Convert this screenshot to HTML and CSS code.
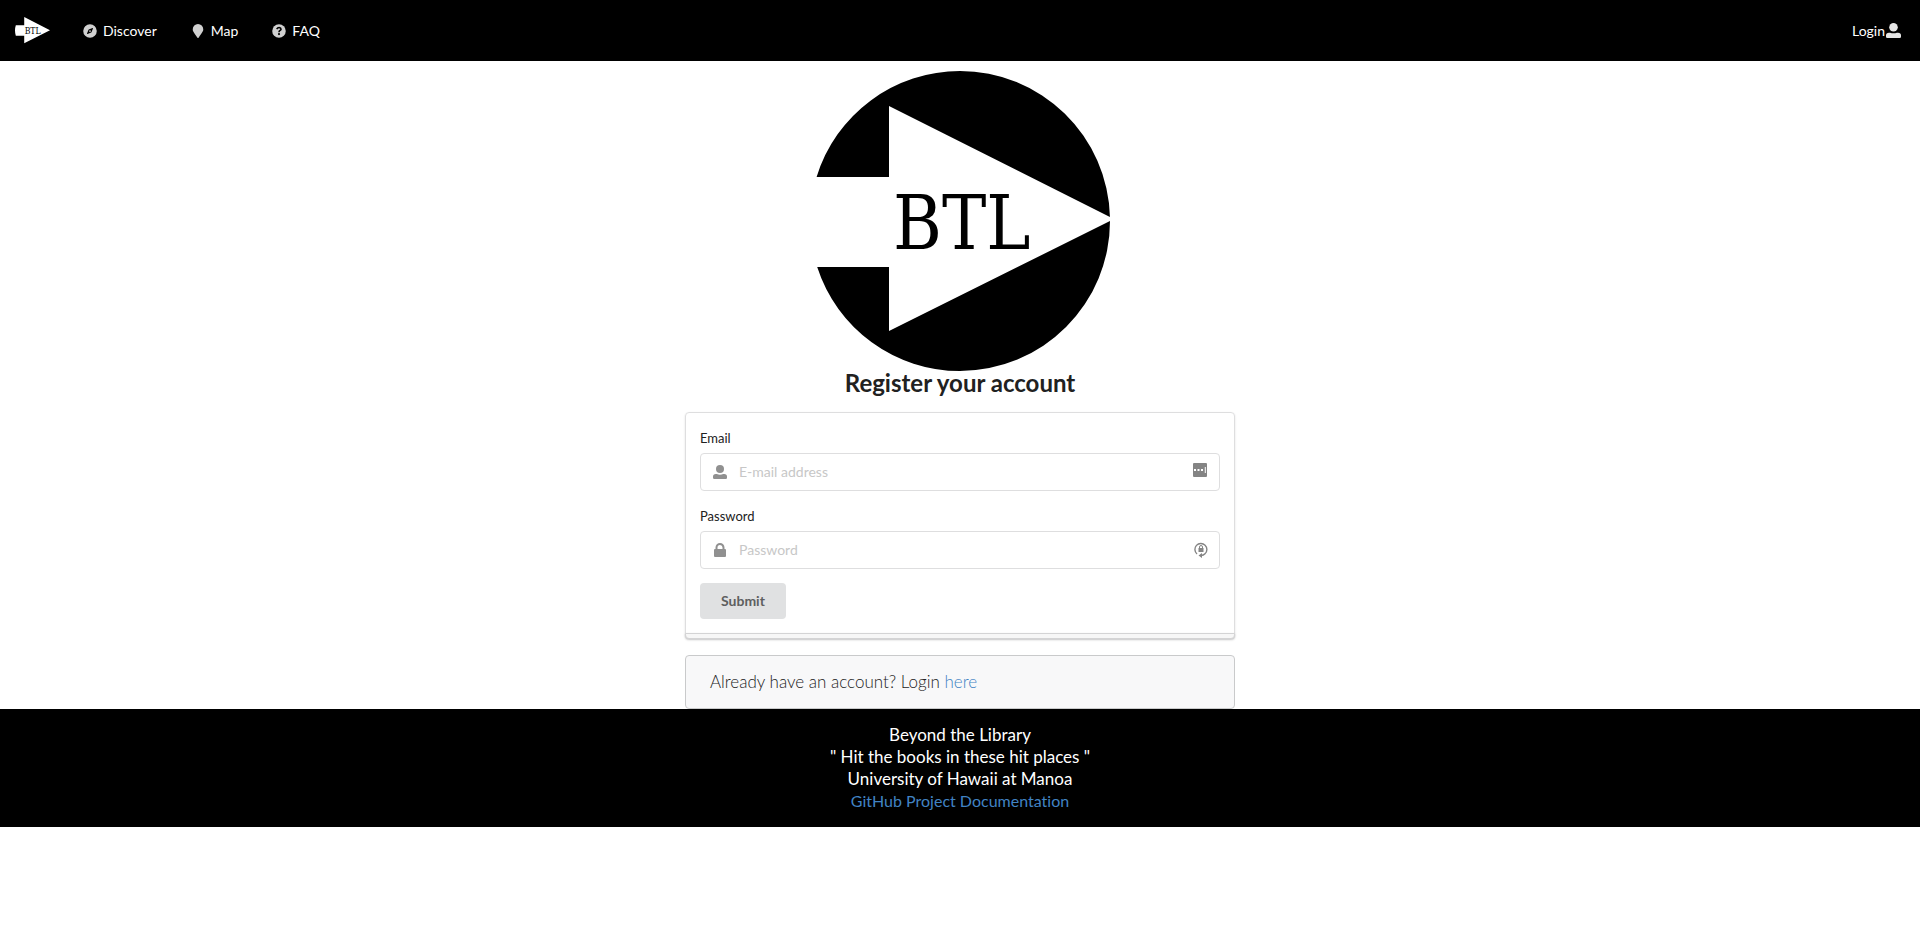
FILE: index.html
```html
<!DOCTYPE html>
<html lang="en">
<head>
<meta charset="utf-8">
<title>Beyond the Library</title>
<link rel="stylesheet" href="styles.css">
</head>
<body>
<nav class="navbar">
  <a class="item brand" href="#" aria-label="Home"><svg class="brand-logo" viewBox="0 0 300 300"><path fill="#fff" d="M7 106H79V35L300 148L79 260V196H7Q-7 150 7 106Z"/><text class="logo-text" x="83" y="178">BTL</text></svg></a>
  <a class="item" href="#"><svg class="icon" viewBox="0 0 512 512"><path fill-rule="evenodd" d="M256 8a248 248 0 1 0 0 496a248 248 0 1 0 0-496M365 165L310 303Q307 308 302 311L164 366Q142 371 147 347L202 209Q205 204 210 201L348 146Q371 142 365 165M256 224a32 32 0 1 0 0 64a32 32 0 1 0 0-64"/></svg>Discover</a>
  <a class="item" href="#"><svg class="icon" viewBox="-64 0 512 512"><path d="M172 502C27 291 0 270 0 192a192 192 0 0 1 384 0c0 78-27 99-172 310q-20 22-40 0"/></svg>Map</a>
  <a class="item" href="#"><svg class="icon" viewBox="0 0 512 512"><circle cx="256" cy="256" r="248"/><path fill="none" stroke="#000" stroke-width="58" d="M172 190Q205 130 260 130Q330 135 330 190C330 240 256 235 256 300"/><circle cx="256" cy="368" r="40" fill="#000"/></svg>FAQ</a>
  <a class="item login" href="#">Login<svg class="user-icon" viewBox="0 0 14 14"><circle cx="7" cy="4" r="4"/><path d="M0 12.800V11.500Q0 9 2.800 9H3.800Q7 10.300 10.200 9H11.200Q14 9 14 11.500V12.800Q14 14 12.800 14H1.200Q0 14 0 12.800Z"/></svg></a>
</nav>
<main class="register">
  <svg class="logo" viewBox="0 0 300 300" role="img" aria-label="BTL"><path d="M6.600 106A150 150 0 0 1 150 0A150 150 0 0 1 299.950 146L79 35V106ZM7.200 196A150 150 0 0 0 150 300A150 150 0 0 0 300 150L79 260V196Z"/><text class="logo-text" x="83" y="178">BTL</text></svg>
  <h2 class="title">Register your account</h2>
  <form class="card">
    <label class="label" for="email">Email</label>
    <div class="field">
      <svg class="lead" viewBox="0 0 14 14"><circle cx="7" cy="4" r="4"/><path d="M0 12.800V11.500Q0 9 2.800 9H3.800Q7 10.300 10.200 9H11.200Q14 9 14 11.500V12.800Q14 14 12.800 14H1.200Q0 14 0 12.800Z"/></svg>
      <input class="input" id="email" type="email" placeholder="E-mail address">
      <svg class="fill email-fill" viewBox="0 0 14 14"><rect width="14" height="14" rx="1"/><path fill="#fff" d="M1 6h2v2H1zM4.500 6h2v2h-2zM8 6h2v2H8zM11.800 4h1v6h-1z"/></svg>
    </div>
    <label class="label" for="password">Password</label>
    <div class="field">
      <svg class="lead" viewBox="0 0 14 14"><path fill-rule="evenodd" d="M2.500 6V4.500a4.500 4.500 0 0 1 9 0V6H12q1 0 1 1V13q0 1-1 1H2q-1 0-1-1V7q0-1 1-1ZM4.500 6h5V4.500a2.500 2.500 0 0 0-5 0Z"/></svg>
      <input class="input" id="password" type="password" placeholder="Password">
      <svg class="fill password-fill" viewBox="0 0 14 16"><path fill="none" stroke="#848484" stroke-width="1.400" d="M3 12A6 6 0 1 1 11 11.800Q9.500 13.500 7 13.500"/><path d="M4.500 6h5v4h-5zM4.500 13.500L8 11v5z"/><path fill="none" stroke="#848484" d="M5.500 6V5a1.500 1.500 0 0 1 3 0V6"/></svg>
    </div>
    <button class="submit" type="submit">Submit</button>
  </form>
  <p class="message">Already have an account? Login <a href="#">here</a></p>
</main>
<footer class="footer">
  <div>Beyond the Library</div>
  <div>" Hit the books in these hit places "</div>
  <div>University of Hawaii at Manoa</div>
  <a class="docs" href="#">GitHub Project Documentation</a>
</footer>
</body>
</html>
```
FILE: styles.css
```css
* { box-sizing: border-box; }
body { margin: 0; background: #fff; color: #212121; font: 14px/20px Lato, sans-serif; font-variant-ligatures: none; }
a { color: #4183c4; text-decoration: none; }
.logo-text { font: 74px "DejaVu Serif Condensed", "DejaVu Serif", serif; fill: #000; }

.navbar { display: flex; align-items: stretch; min-height: 61px; background: #000; }
.item { display: flex; align-items: center; padding: 0 16px 0 17px; color: #fff; }
.brand { padding: 0 15px; }
.brand-logo { width: 35px; height: 35px; }
.icon { width: 14px; height: 14px; margin: 0 6px 0 1px; fill: #d0d0d0; }
.login { margin-left: auto; padding-right: 19px; }
.user-icon { width: 15px; height: 15px; margin-left: 1px; fill: #e6e6e6; }

.register { display: flex; flex-direction: column; width: 100%; max-width: 550px; margin: 0 auto; padding-top: 10px; }
.logo { width: 300px; height: 300px; align-self: center; }
.title { margin: 0 0 17px; font-size: 24px; line-height: 24px; font-weight: 700; text-align: center; }
.card { position: relative; padding: 14px; margin-bottom: 18px; border: 1px solid #dededf; border-radius: 4px; box-shadow: 0 1px 2px #22242626; }
.card::after { content: ""; position: absolute; left: -1px; right: -1px; bottom: -3px; height: 4px; border: 1px solid #d4d4d5; border-radius: 0 0 4px 4px; background: #f7f7f7; box-shadow: 0 1px 2px #22242640; }
.label { display: block; margin-bottom: 4px; font-size: 13px; line-height: 22px; }
.field { position: relative; margin-bottom: 14px; }
.input { display: block; width: 100%; height: 38px; padding: 0 38px 2px; border: 1px solid #dededf; border-radius: 4px; background: #fff; color: #212121; font: inherit; }
.input::placeholder { color: #c7c7c7; opacity: 1; }
.lead { position: absolute; left: 13px; top: 12px; width: 14px; height: 14px; fill: #909090; }
.fill { position: absolute; fill: #848484; }
.email-fill { right: 13px; top: 10px; width: 14px; height: 14px; }
.password-fill { right: 12px; top: 11px; width: 14px; height: 16px; }
.submit { display: block; height: 36px; margin-bottom: 3px; padding: 0 21px; border: 0; border-radius: 4px; background: #e0e1e2; color: #5e5f5f; font: 700 14px/20px Lato, sans-serif; }
.message { margin: 0; padding: 15px 24px; border: 1px solid #c9cacb; border-radius: 4px; background: #f8f8f9; color: #222; font-size: 17px; font-weight: 300; line-height: 22px; }
.footer { display: flex; flex-direction: column; align-items: center; padding: 15px 16px; background: #000; color: #fff; font-size: 17px; line-height: 22px; }
.docs { font-size: 16px; }
```
